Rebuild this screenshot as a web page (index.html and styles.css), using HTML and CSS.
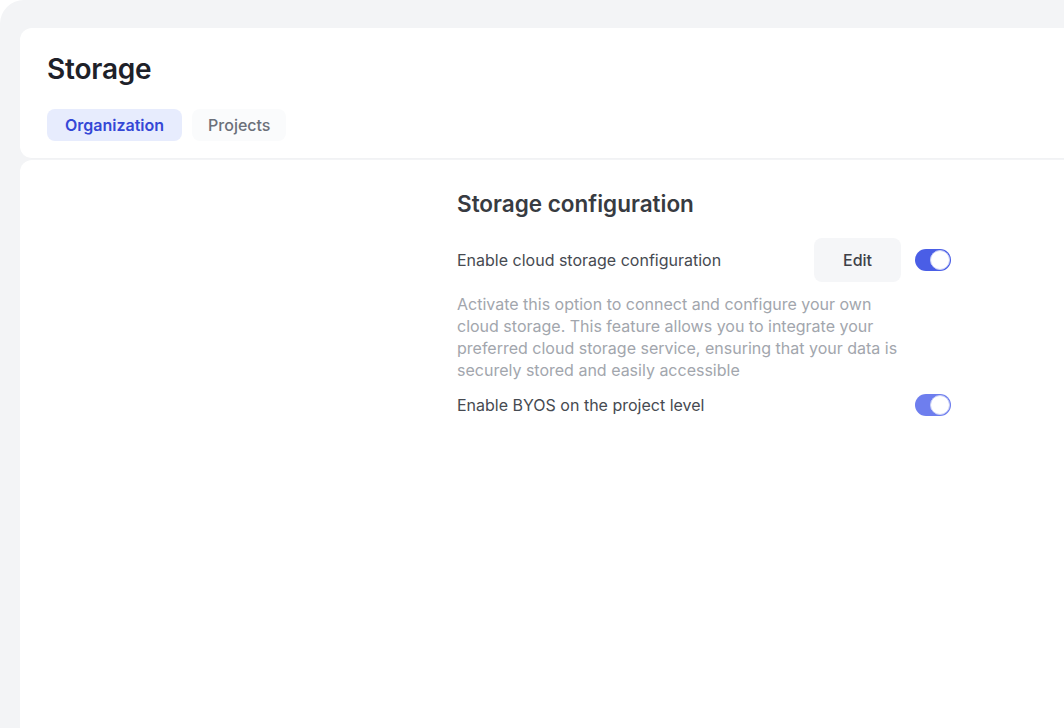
FILE: index.html
```html
<!DOCTYPE html>
<html>
<head>
<meta charset="utf-8">
<link rel="stylesheet" href="styles.css">
</head>
<body>
<div class="frame">
  <header class="header">
    <h1 class="title">Storage</h1>
    <nav class="tabs">
      <button class="tab tab-active">Organization</button>
      <button class="tab tab-plain">Projects</button>
    </nav>
  </header>
  <main class="content">
    <div class="aside"></div>
    <section class="settings">
      <h2 class="section-title">Storage configuration</h2>
      <div class="row">
        <span class="row-label">Enable cloud storage configuration</span>
        <div class="row-actions">
          <button class="btn">Edit</button>
          <span class="toggle"><span class="knob"></span></span>
        </div>
      </div>
      <p class="desc">Activate this option to connect and configure your own cloud storage. This feature allows you to integrate your preferred cloud storage service, ensuring that your data is securely stored and easily accessible</p>
      <div class="row row-sub">
        <span class="row-label">Enable BYOS on the project level</span>
        <div class="row-actions">
          <span class="toggle toggle-dim"><span class="knob"></span></span>
        </div>
      </div>
    </section>
  </main>
</div>
</body>
</html>
```

FILE: styles.css
```css
* { box-sizing: border-box; }
html, body { margin: 0; padding: 0; background: #ffffff; }
body {
  font-family: Inter, "Noto Sans", sans-serif;
  width: 1064px;
  height: 728px;
  overflow: hidden;
}
.frame {
  background: #f3f4f6;
  border-top-left-radius: 24px;
  height: 728px;
  padding: 28px 0 0 20px;
  display: flex;
  flex-direction: column;
  gap: 1px;
}
.header {
  background: #ffffff;
  border-radius: 12px 0 0 12px;
  height: 131px;
  padding: 24px 27px 0;
  border-bottom: 1px solid #f1f2f4;
}
.title {
  margin: 0;
  font-size: 28px;
  font-weight: 600;
  color: #1e2129;
  line-height: 34px;
  letter-spacing: -0.2px;
}
.tabs {
  display: flex;
  gap: 10px;
  margin-top: 23px;
}
.tab {
  font-family: inherit;
  font-size: 16px;
  font-weight: 500;
  height: 32px;
  padding: 0 18px;
  border: none;
  border-radius: 8px;
  background: #fafbfc;
  color: #6b7079;
}
.tab-plain { padding: 0 16px; }
.tab-active {
  background: #e7ecfd;
  color: #3447d6;
  font-weight: 600;
}
.content {
  flex: 1;
  background: #ffffff;
  border-top-left-radius: 12px;
  display: grid;
  grid-template-columns: 437px 494px;
}
.settings {
  padding-top: 30px;
}
.section-title {
  margin: 0 0 20px;
  font-size: 22.5px;
  font-weight: 600;
  color: #383b41;
  line-height: 28px;
}
.row {
  display: flex;
  align-items: center;
  justify-content: space-between;
  min-height: 44px;
}
.row-label {
  font-size: 16px;
  color: #464a51;
}
.row-actions {
  display: flex;
  align-items: center;
  gap: 14px;
}
.btn {
  font-family: inherit;
  font-size: 16px;
  font-weight: 500;
  color: #3e4148;
  width: 87px;
  height: 44px;
  border: none;
  border-radius: 8px;
  background: #f5f6f8;
}
.toggle {
  width: 36px;
  height: 22px;
  border-radius: 11px;
  background: #4a5ee6;
  display: flex;
  align-items: center;
  justify-content: flex-end;
  padding: 0 1px;
}
.toggle-dim { background: #6e7eee; }
.knob {
  width: 20px;
  height: 20px;
  border-radius: 50%;
  background: #ffffff;
  border: 1px solid #c9cff7;
}
.desc {
  margin: 11px 0 0;
  width: 446px;
  font-size: 16px;
  line-height: 22px;
  color: #a2a6ad;
}
.row-sub {
  margin-top: 2px;
}
```
